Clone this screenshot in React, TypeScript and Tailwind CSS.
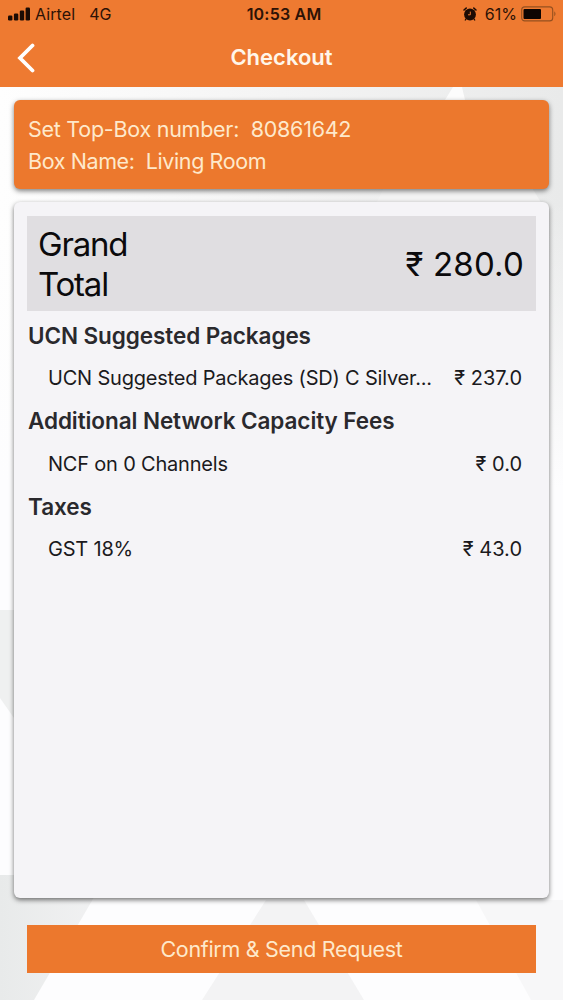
interface LineItem {
  name: string;
  price: string;
}

interface Section {
  title: string;
  items: LineItem[];
}

const sections: Section[] = [
  {
    title: 'UCN Suggested Packages',
    items: [{ name: 'UCN Suggested Packages (SD) C Silver...', price: '₹ 237.0' }],
  },
  {
    title: 'Additional Network Capacity Fees',
    items: [{ name: 'NCF on 0 Channels', price: '₹ 0.0' }],
  },
  {
    title: 'Taxes',
    items: [{ name: 'GST 18%', price: '₹ 43.0' }],
  },
];

function SignalIcon() {
  return (
    <svg width="22" height="14" viewBox="0 0 22 14" fill="#1c0b04">
      <rect x="0" y="8.5" width="4.4" height="5" rx="1.2" />
      <rect x="5.9" y="6.5" width="4.4" height="7" rx="1.2" />
      <rect x="11.8" y="3.5" width="4.4" height="10" rx="1.2" />
      <rect x="17.6" y="0.5" width="4.4" height="13" rx="1.2" />
    </svg>
  );
}

function AlarmIcon() {
  return (
    <svg width="14" height="14" viewBox="0 0 14 14" fill="none">
      <circle cx="7" cy="7.5" r="5.9" fill="#1c0b04" />
      <path d="M1 3 3.2 1.1M13 3 10.8 1.1" stroke="#1c0b04" strokeWidth="1.5" strokeLinecap="round" />
      <path d="M3 12 2.3 13M11 12l.7 1" stroke="#1c0b04" strokeWidth="1.3" strokeLinecap="round" />
      <path d="M7.3 4.6v3.2H5" stroke="#ee7a30" strokeWidth="1" />
    </svg>
  );
}

function BatteryIcon() {
  return (
    <svg width="36" height="16" viewBox="0 0 36 16" fill="none">
      <rect x="0.7" y="0.9" width="31" height="14" rx="3" stroke="#95501f" strokeWidth="1.1" />
      <rect x="2.5" y="3" width="17.5" height="10" rx="1" fill="#0d0502" />
      <path d="M33.3 5.6c1.5.6 1.5 4 0 4.6z" fill="#95501f" />
    </svg>
  );
}

function Backdrop() {
  return (
    <svg className="absolute inset-0 h-full w-full" viewBox="0 0 563 1000" preserveAspectRatio="none">
      <defs>
        <linearGradient id="top" x1="0" x2="1" y1="0" y2="0">
          <stop offset="0" stopColor="#fefefe" />
          <stop offset="0.5" stopColor="#f4f4f4" />
          <stop offset="1" stopColor="#e9eaea" />
        </linearGradient>
        <linearGradient id="fade" x1="0" x2="0" y1="0" y2="1">
          <stop offset="0" stopColor="#fdfdfe" stopOpacity="0" />
          <stop offset="1" stopColor="#fdfdfe" />
        </linearGradient>
        <linearGradient id="corner" x1="0" x2="1" y1="0" y2="0">
          <stop offset="0" stopColor="#e8eaea" />
          <stop offset="1" stopColor="#f2f2f3" />
        </linearGradient>
      </defs>
      <rect width="563" height="1000" fill="#fdfdfe" />
      <rect y="87" width="563" height="400" fill="url(#top)" />
      <rect y="200" width="563" height="287" fill="url(#fade)" />
      <path d="M453 87h9l3 13h-20z" fill="#fcfcfc" />
      <path d="M384 188h148l10 16H376z" fill="#f3f3f3" />
      <path d="M0 610h14v108L0 698z" fill="#eff0f0" />
      <path d="M0 875h107L34 1000H0z" fill="url(#corner)" />
      <path d="M266 900h38l60 100H202z" fill="#f3f3f4" />
      <path d="M476 900h87v100h-32z" fill="#f7f7f8" />
    </svg>
  );
}

export default function App() {
  return (
    <div className="relative flex h-[1000px] w-[563px] flex-col overflow-hidden font-['Inter','Liberation_Sans',sans-serif]">
      <Backdrop />

      {/* Header */}
      <header className="relative h-[87px] shrink-0 bg-[#ee7a31]">
        <div className="grid h-7 grid-cols-3 items-center pl-2 pr-[6px] text-base text-[#2c1206]">
          <div className="flex items-center">
            <SignalIcon />
            <span className="ml-[5px] tracking-[0.1px]">Airtel</span>
            <span className="ml-[14px]">4G</span>
          </div>
          <div className="pl-[3px] text-center font-semibold tracking-[0.2px]">10:53 AM</div>
          <div className="flex items-center justify-end">
            <AlarmIcon />
            <span className="ml-2">61%</span>
            <span className="ml-1">
              <BatteryIcon />
            </span>
          </div>
        </div>
        <div className="grid h-[59px] grid-cols-[60px_1fr_60px] items-center">
          <button className="pl-[17px]" aria-label="Back">
            <svg width="18" height="30" viewBox="0 0 18 30" fill="none">
              <path d="M15.5 2.5 3 15l12.5 12.5" stroke="#fff" strokeWidth="3.8" strokeLinecap="round" />
            </svg>
          </button>
          <h1 className="text-center text-[22px] font-semibold text-[#fff6ea]">Checkout</h1>
        </div>
      </header>

      <main className="relative flex flex-1 flex-col px-[14px] pt-[13px]">
        {/* Box info */}
        <div className="h-[89px] rounded-md bg-[#ec782d] pl-[14px] pt-[13px] text-[21.5px] leading-[32.5px] text-[#fee9cb] shadow-[0_2px_5px_rgba(0,0,0,0.5)]">
          <p className="whitespace-pre tracking-[-0.26px]">Set Top-Box number:  80861642</p>
          <p className="-mt-px whitespace-pre tracking-[-0.4px]">Box Name:  Living Room</p>
        </div>

        {/* Bill summary */}
        <div className="mt-[13px] h-[696px] rounded-md bg-[#f5f4f7] px-[13px] pt-[14px] shadow-[0_2px_5px_rgba(0,0,0,0.55)]">
          <div className="flex h-[95px] items-center justify-between bg-[#e0dee1] pl-[11px] pr-[12px] text-[33px] leading-[40px] text-[#0b0a0c]">
            <p className="w-[120px] tracking-[-1.2px]">Grand Total</p>
            <p className="tracking-[0.2px]">₹ 280.0</p>
          </div>
          <div className="pt-[3px]">
            {sections.map((section) => (
              <section key={section.title}>
                <h2 className="flex h-[43px] items-center pl-px text-[22.5px] font-semibold tracking-[-0.08px] text-[#2a292d]">
                  {section.title}
                </h2>
                {section.items.map((item) => (
                  <div
                    key={item.name}
                    className="flex h-[42.5px] items-center justify-between pl-[21px] pr-[14px] text-[20px] text-[#1b1a1d]"
                  >
                    <span className="tracking-[-0.2px]">{item.name}</span>
                    <span>{item.price}</span>
                  </div>
                ))}
              </section>
            ))}
          </div>
        </div>

        <button className="mx-[13px] mt-[27px] h-[48px] bg-[#ec782d] text-[21.5px] tracking-[-0.3px] text-[#fee9cb]">
          Confirm &amp; Send Request
        </button>
      </main>
    </div>
  );
}
